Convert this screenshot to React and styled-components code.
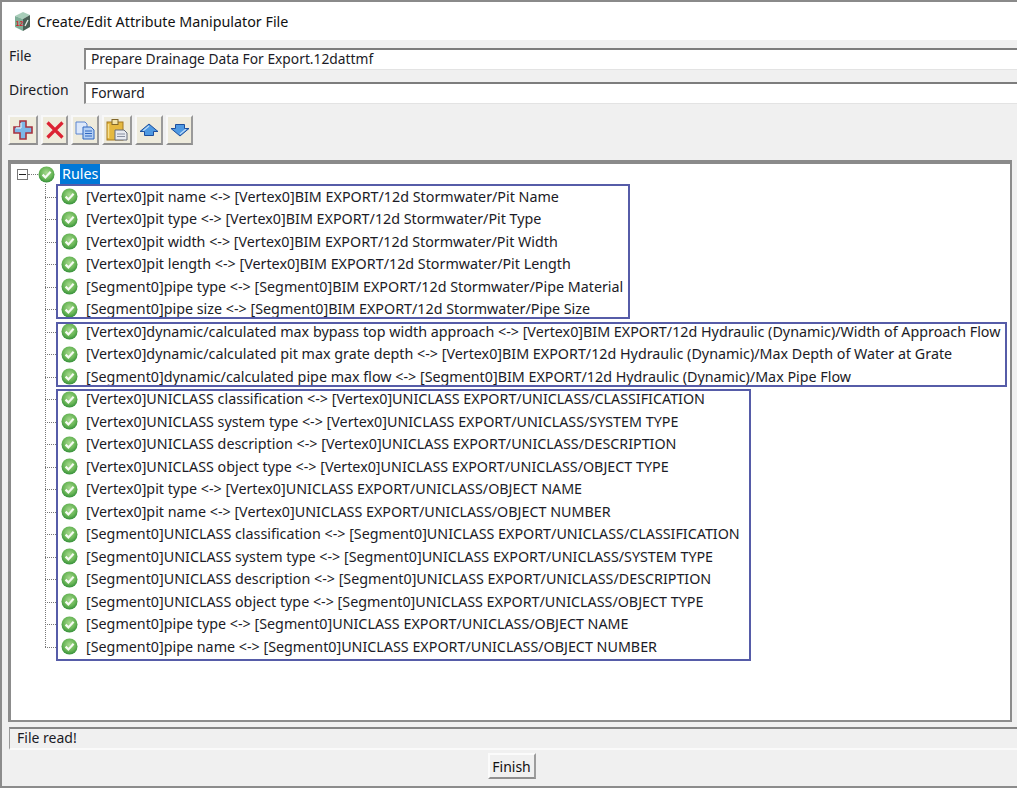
import React from "react";
import styled, { createGlobalStyle } from "styled-components";

const GlobalStyle = createGlobalStyle`
  html, body {
    margin: 0;
    padding: 0;
    background: #fff;
  }
  * {
    box-sizing: border-box;
  }
`;

const groups = [
  {
    width: 574,
    top: -2,
    bottom: 2,
    rows: [
      "[Vertex0]pit name <-> [Vertex0]BIM EXPORT/12d Stormwater/Pit Name",
      "[Vertex0]pit type <-> [Vertex0]BIM EXPORT/12d Stormwater/Pit Type",
      "[Vertex0]pit width <-> [Vertex0]BIM EXPORT/12d Stormwater/Pit Width",
      "[Vertex0]pit length <-> [Vertex0]BIM EXPORT/12d Stormwater/Pit Length",
      "[Segment0]pipe type <-> [Segment0]BIM EXPORT/12d Stormwater/Pipe Material",
      "[Segment0]pipe size <-> [Segment0]BIM EXPORT/12d Stormwater/Pipe Size",
    ],
  },
  {
    width: 951,
    top: 1,
    bottom: 1,
    rows: [
      "[Vertex0]dynamic/calculated max bypass top width approach <-> [Vertex0]BIM EXPORT/12d Hydraulic (Dynamic)/Width of Approach Flow",
      "[Vertex0]dynamic/calculated pit max grate depth <-> [Vertex0]BIM EXPORT/12d Hydraulic (Dynamic)/Max Depth of Water at Grate",
      "[Segment0]dynamic/calculated pipe max flow <-> [Segment0]BIM EXPORT/12d Hydraulic (Dynamic)/Max Pipe Flow",
    ],
  },
  {
    width: 695,
    top: 1,
    bottom: -3,
    rows: [
      "[Vertex0]UNICLASS classification <-> [Vertex0]UNICLASS EXPORT/UNICLASS/CLASSIFICATION",
      "[Vertex0]UNICLASS system type <-> [Vertex0]UNICLASS EXPORT/UNICLASS/SYSTEM TYPE",
      "[Vertex0]UNICLASS description <-> [Vertex0]UNICLASS EXPORT/UNICLASS/DESCRIPTION",
      "[Vertex0]UNICLASS object type <-> [Vertex0]UNICLASS EXPORT/UNICLASS/OBJECT TYPE",
      "[Vertex0]pit type <-> [Vertex0]UNICLASS EXPORT/UNICLASS/OBJECT NAME",
      "[Vertex0]pit name <-> [Vertex0]UNICLASS EXPORT/UNICLASS/OBJECT NUMBER",
      "[Segment0]UNICLASS classification <-> [Segment0]UNICLASS EXPORT/UNICLASS/CLASSIFICATION",
      "[Segment0]UNICLASS system type <-> [Segment0]UNICLASS EXPORT/UNICLASS/SYSTEM TYPE",
      "[Segment0]UNICLASS description <-> [Segment0]UNICLASS EXPORT/UNICLASS/DESCRIPTION",
      "[Segment0]UNICLASS object type <-> [Segment0]UNICLASS EXPORT/UNICLASS/OBJECT TYPE",
      "[Segment0]pipe type <-> [Segment0]UNICLASS EXPORT/UNICLASS/OBJECT NAME",
      "[Segment0]pipe name <-> [Segment0]UNICLASS EXPORT/UNICLASS/OBJECT NUMBER",
    ],
  },
];

const Page = styled.div`
  width: 1017px;
  height: 788px;
  overflow: hidden;
  display: flex;
  flex-direction: column;
  background: #f0f0f0;
  border-top: 2px solid #8a8a8a;
  border-left: 2px solid #8c8c8c;
  border-bottom: 2px solid #8c8c8c;
  font-family: "Noto Sans", "Open Sans", sans-serif;
  font-size: 14px;
  color: #1b1b26;
`;

const TitleBar = styled.div`
  height: 38px;
  flex: none;
  display: flex;
  align-items: center;
  gap: 5px;
  padding: 0 0 0 12px;
  background: #fff;
  font-size: 14.3px;
  color: #111;
`;

const FieldRow = styled.div`
  height: 22px;
  flex: none;
  margin-top: ${(p) => p.$top}px;
  display: flex;
  padding-left: 7px;
`;

const FieldLabel = styled.div`
  width: 75px;
  flex: none;
  line-height: 16px;
`;

const FieldInput = styled.div`
  flex: 1;
  background: #fff;
  border-top: 2px solid #7d7d7d;
  border-left: 2px solid #8c8c8c;
  border-bottom: 1px solid #e3e3e3;
  padding-left: 5px;
  font-size: 13.8px;
  line-height: 18px;
`;

const Toolbar = styled.div`
  flex: none;
  display: flex;
  gap: 3px;
  margin-top: 11px;
  padding-left: 6px;
`;

const ToolButton = styled.div`
  width: ${(p) => p.$w}px;
  height: 30px;
  display: flex;
  align-items: center;
  justify-content: center;
  background: #eeebdc;
  border-top: 2px solid #f8f8f8;
  border-left: 2px solid #f8f8f8;
  border-right: 2px solid #9a9a9a;
  border-bottom: 2px solid #8f8f8f;
`;

const TreePanel = styled.div`
  flex: none;
  height: 562px;
  width: 1004px;
  margin: 15px 0 0 6px;
  background: #fff;
  border-top: 4px solid #8a8a8a;
  border-left: 3px solid #8c8c8c;
  border-right: 2px solid #8c8c8c;
  border-bottom: 2px solid #8c8c8c;
  font-size: 14.3px;
`;

const RootRow = styled.div`
  height: 21.5px;
  display: flex;
  align-items: center;
  padding-left: 6px;
`;

const ExpandBox = styled.div`
  width: 11px;
  height: 11px;
  flex: none;
  display: flex;
  align-items: center;
  justify-content: center;
  background: #fff;
  border: 1px solid #777;
`;

const Minus = styled.div`
  width: 7px;
  height: 1px;
  background: #222;
`;

const RootConnector = styled.div`
  width: 10px;
  flex: none;
  border-top: 1px dotted #777;
`;

const RootLabel = styled.div`
  margin-left: 5px;
  height: 21px;
  line-height: 20px;
  padding: 0 2px;
  background: #0078d7;
  color: #fff;
`;

const RuleTree = styled.div`
  position: relative;
  padding-left: 45px;
  &::before {
    content: "";
    position: absolute;
    left: 34px;
    top: -2px;
    bottom: 11px;
    border-left: 1px dotted #777;
  }
`;

const RuleGroup = styled.div`
  position: relative;
`;

const GroupFrame = styled.div`
  position: absolute;
  left: 0;
  top: ${(p) => p.$top}px;
  bottom: ${(p) => p.$bottom}px;
  width: ${(p) => p.$w}px;
  border: 2px solid #565ca8;
  pointer-events: none;
`;

const RuleRow = styled.div`
  position: relative;
  height: 22.5px;
  display: flex;
  align-items: center;
  gap: 8px;
  padding-left: 5px;
  white-space: nowrap;
  &::before {
    content: "";
    position: absolute;
    left: -11px;
    width: 13px;
    top: 50%;
    border-top: 1px dotted #777;
  }
`;

const RuleText = styled.span`
  padding-bottom: 1px;
`;

const StatusBar = styled.div`
  flex: none;
  height: 23px;
  margin: 5px 0 0 7px;
  border-top: 2px solid #858585;
  border-left: 1px solid #9a9a9a;
  border-bottom: 2px solid #fafafa;
  padding-left: 7px;
  line-height: 18px;
`;

const Footer = styled.div`
  flex: 1;
  display: flex;
  justify-content: center;
  padding: 3px 0 0 4px;
`;

const FinishButton = styled.button`
  width: 48px;
  height: 26px;
  padding: 0;
  background: #f0f0f0;
  border-top: 2px solid #fbfbfb;
  border-left: 2px solid #fbfbfb;
  border-right: 2px solid #9d9d9d;
  border-bottom: 2px solid #8f8f8f;
  font-family: inherit;
  font-size: 14px;
  color: #111;
`;

const Logo = () => (
  <svg width="18" height="21" viewBox="0 0 18 21">
    <polygon points="1,5 9,1 16,4 9,8" fill="#a8cdb9" />
    <polygon points="1,5 9,8 9,20 1,16" fill="#7fae98" />
    <polygon points="9,8 16,4 16,16 9,20" fill="#4a5f55" />
    <path d="M11 15 L14 9" stroke="#e6efe8" strokeWidth="1.2" />
    <text x="1.8" y="14.5" fontSize="6.5" fontWeight="700" fill="#d8232a" fontFamily="Liberation Sans">
      12
    </text>
  </svg>
);

const CheckIcon = () => (
  <svg width="17" height="17" viewBox="0 0 17 17" style={{ flex: "none" }}>
    <defs>
      <radialGradient id="ok" cx="50%" cy="40%" r="60%">
        <stop offset="0" stopColor="#a8da90" />
        <stop offset="0.65" stopColor="#68b556" />
        <stop offset="1" stopColor="#35903a" />
      </radialGradient>
    </defs>
    <circle cx="8.5" cy="8.5" r="8" fill="url(#ok)" />
    <path d="M4.6 8.6 L7.4 11.4 L12.6 5.8" fill="none" stroke="#f6fbf2" strokeWidth="2.2" />
  </svg>
);

const PlusIcon = () => (
  <svg width="22" height="22" viewBox="0 0 22 22">
    <path d="M8 2h6v6h6v6h-6v6H8v-6H2V8h6z" fill="#7db7e8" stroke="#a8323e" strokeWidth="1.6" />
    <path d="M9 9V4M9 9H4" stroke="#cfe6f8" strokeWidth="1.4" />
  </svg>
);

const CrossIcon = () => (
  <svg width="20" height="20" viewBox="0 0 20 20">
    <path d="M2.5 2.5 L17.5 17.5 M17.5 2.5 L2.5 17.5" stroke="#dc2333" strokeWidth="3.2" />
  </svg>
);

const CopyIcon = () => (
  <svg width="22" height="20" viewBox="0 0 22 20">
    <path d="M2 2h9l2 2v10H2z" fill="#dce8fa" stroke="#5b84d0" />
    <path d="M9 7h8l3 3v9H9z" fill="#b4d0f5" stroke="#2f66c0" />
    <path d="M11 11h7M11 13.5h7M11 16h7" stroke="#2f66c0" />
  </svg>
);

const PasteIcon = () => (
  <svg width="24" height="24" viewBox="0 0 24 24">
    <rect x="2" y="4" width="16" height="18" fill="#e5b83f" stroke="#a77a1f" />
    <rect x="7" y="1.5" width="6" height="5" fill="#f3e3a6" stroke="#80662a" />
    <path d="M3.5 6v14" stroke="#f6df8c" strokeWidth="1.5" />
    <path d="M10 12h9l3 3v7H10z" fill="#e8eaf0" stroke="#666c7a" />
    <path d="M12 16h8M12 18.5h8" stroke="#8a90a0" />
  </svg>
);

const ArrowIcon = ({ down }) => (
  <svg width="20" height="14" viewBox="0 0 20 14">
    <g transform={down ? "rotate(180 10 7)" : undefined}>
      <path d="M10 1 L19 8.5 H14.5 V12.5 H5.5 V8.5 H1 Z" fill="#4f9ae2" stroke="#1d4f9c" />
      <path d="M10 3 L4.2 7.8" stroke="#bcdcf7" strokeWidth="1.2" />
    </g>
  </svg>
);

const App = () => (
  <Page>
    <GlobalStyle />
    <TitleBar>
      <Logo />
      Create/Edit Attribute Manipulator File
    </TitleBar>
    <FieldRow $top={8}>
      <FieldLabel>File</FieldLabel>
      <FieldInput>Prepare Drainage Data For Export.12dattmf</FieldInput>
    </FieldRow>
    <FieldRow $top={12}>
      <FieldLabel>Direction</FieldLabel>
      <FieldInput>Forward</FieldInput>
    </FieldRow>
    <Toolbar>
      <ToolButton $w={30}><PlusIcon /></ToolButton>
      <ToolButton $w={27}><CrossIcon /></ToolButton>
      <ToolButton $w={28}><CopyIcon /></ToolButton>
      <ToolButton $w={30}><PasteIcon /></ToolButton>
      <ToolButton $w={28}><ArrowIcon /></ToolButton>
      <ToolButton $w={27}><ArrowIcon down /></ToolButton>
    </Toolbar>
    <TreePanel>
      <RootRow>
        <ExpandBox><Minus /></ExpandBox>
        <RootConnector />
        <CheckIcon />
        <RootLabel>Rules</RootLabel>
      </RootRow>
      <RuleTree>
        {groups.map((group) => (
          <RuleGroup key={group.width}>
            {group.rows.map((row) => (
              <RuleRow key={row}>
                <CheckIcon />
                <RuleText>{row}</RuleText>
              </RuleRow>
            ))}
            <GroupFrame $w={group.width} $top={group.top} $bottom={group.bottom} />
          </RuleGroup>
        ))}
      </RuleTree>
    </TreePanel>
    <StatusBar>File read!</StatusBar>
    <Footer>
      <FinishButton>Finish</FinishButton>
    </Footer>
  </Page>
);

export default App;
